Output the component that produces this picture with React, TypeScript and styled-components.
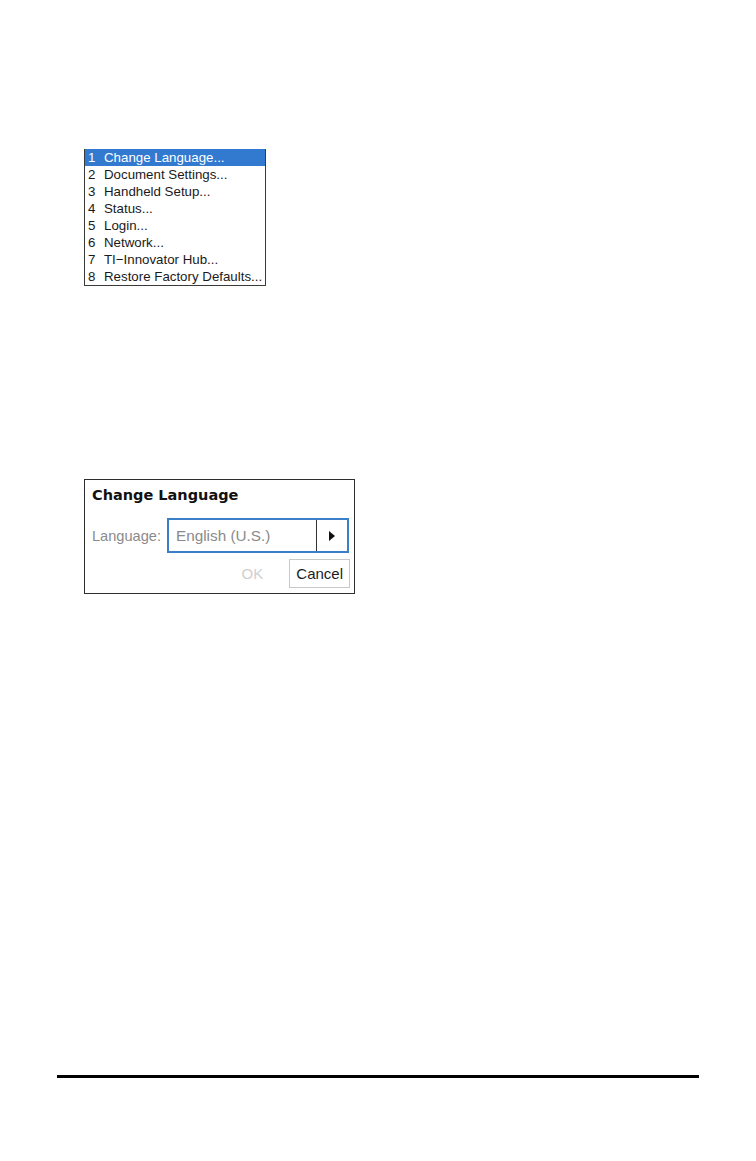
import React, { FC } from 'react';
import styled, { createGlobalStyle } from 'styled-components';

const GlobalStyle = createGlobalStyle`
    html, body {
        margin: 0;
        padding: 0;
        background: #ffffff;
    }
    body {
        font-family: "Liberation Sans", Arial, sans-serif;
    }
`;

const Page = styled.div`
    width: 756px;
    height: 1161px;
    box-sizing: border-box;
    padding: 0 57px;
    display: flex;
    flex-direction: column;
`;

const Figures = styled.div`
    padding-left: 27px;
    display: flex;
    flex-direction: column;
    align-items: flex-start;
`;

const Menu = styled.ul`
    list-style: none;
    margin: 149px 0 0 0;
    padding: 0;
    width: 182px;
    box-sizing: border-box;
    border: 1px solid #3a3a3a;
    border-top: none;
    background: #fff;
`;

const MenuRow = styled.li<{ selected?: boolean }>`
    height: 17px;
    display: flex;
    align-items: center;
    padding-left: 3px;
    font-size: 13.3px;
    color: ${p => (p.selected ? '#ffffff' : '#1a1a1a')};
    background: ${p => (p.selected ? '#3279d0' : 'transparent')};
    white-space: nowrap;
`;

const MenuNum = styled.span`
    width: 16px;
    flex-shrink: 0;
`;

const Dialog = styled.div`
    margin-top: 193px;
    width: 271px;
    height: 115px;
    box-sizing: border-box;
    border: 1px solid #2e2e2e;
    padding: 5px 4px 5px 7px;
    display: flex;
    flex-direction: column;
`;

const Title = styled.div`
    font-family: "DejaVu Sans", Verdana, sans-serif;
    font-weight: bold;
    font-size: 14.5px;
    color: #111;
    height: 20px;
    line-height: 20px;
`;

const FieldRow = styled.div`
    margin-top: 13px;
    display: flex;
    align-items: center;
    gap: 6px;
`;

const FieldLabel = styled.span`
    font-size: 14.6px;
    color: #8a8a8a;
`;

const Select = styled.div`
    width: 182px;
    height: 35px;
    box-sizing: border-box;
    border: 2px solid #3b7fc9;
    display: flex;
    align-items: stretch;
`;

const SelectValue = styled.span`
    flex: 1;
    display: flex;
    align-items: center;
    padding-left: 7px;
    font-size: 15.3px;
    color: #8a8a8a;
`;

const SelectArrow = styled.span`
    width: 30px;
    border-left: 1px solid #333;
    display: flex;
    align-items: center;
    justify-content: center;
`;

const Actions = styled.div`
    margin-top: 6px;
    display: flex;
    justify-content: flex-end;
    align-items: center;
    gap: 19px;
`;

const Button = styled.span<{ disabled?: boolean }>`
    height: 29px;
    box-sizing: border-box;
    padding: 0 6px;
    display: flex;
    align-items: center;
    font-size: 15px;
    color: ${p => (p.disabled ? '#cfcfcf' : '#1c1c1c')};
    border: 1px solid ${p => (p.disabled ? 'transparent' : '#c8c8c8')};
`;

const Rule = styled.div`
    margin-top: auto;
    margin-bottom: 83px;
    height: 3px;
    background: #000;
`;

const items = [
    'Change Language...',
    'Document Settings...',
    'Handheld Setup...',
    'Status...',
    'Login...',
    'Network...',
    'TI\u2212Innovator Hub...',
    'Restore Factory Defaults...'
];

const SettingsMenu: FC = () => (
    <Menu>
        {items.map((label, i) => (
            <MenuRow key={label} selected={i === 0}>
                <MenuNum>{i + 1}</MenuNum>
                {label}
            </MenuRow>
        ))}
    </Menu>
);

const LanguageDialog: FC = () => (
    <Dialog>
        <Title>Change Language</Title>
        <FieldRow>
            <FieldLabel>Language:</FieldLabel>
            <Select>
                <SelectValue>English (U.S.)</SelectValue>
                <SelectArrow>
                    <svg width="6" height="10" viewBox="0 0 6 10">
                        <path d="M0 0 L6 5 L0 10 Z" fill="#111" />
                    </svg>
                </SelectArrow>
            </Select>
        </FieldRow>
        <Actions>
            <Button disabled>OK</Button>
            <Button>Cancel</Button>
        </Actions>
    </Dialog>
);

export default function App() {
    return (
        <>
            <GlobalStyle />
            <Page>
                <Figures>
                    <SettingsMenu />
                    <LanguageDialog />
                </Figures>
                <Rule />
            </Page>
        </>
    );
}
